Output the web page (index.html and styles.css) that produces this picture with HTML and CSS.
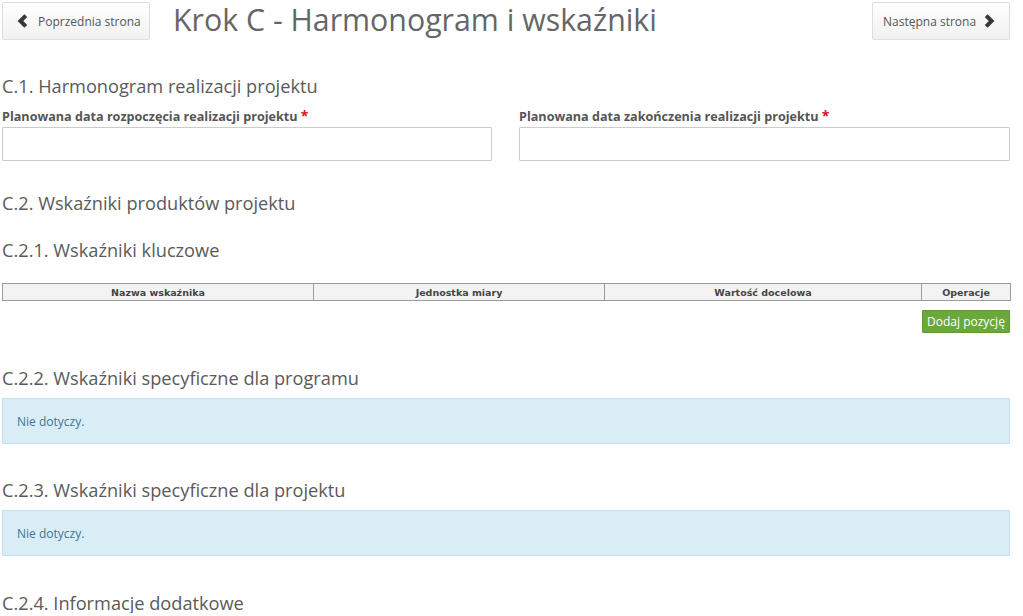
FILE: index.html
```html
<!DOCTYPE html>
<html lang="pl">
<head>
<meta charset="utf-8">
<title>Krok C - Harmonogram i wskaźniki</title>
<link rel="stylesheet" href="styles.css">
</head>
<body>
<div class="page">
  <div class="topbar">
    <a class="navbtn prev" href="#">
      <svg class="chev" width="11" height="14" viewBox="0 0 11 14"><polyline points="8.8,1.6 3.4,7 8.8,12.4" fill="none" stroke="#383838" stroke-width="4" stroke-linejoin="miter"/></svg>
      <span>Poprzednia strona</span>
    </a>
    <h1 class="title">Krok C - Harmonogram i wskaźniki</h1>
    <a class="navbtn next" href="#">
      <span>Następna strona</span>
      <svg class="chev" width="11" height="14" viewBox="0 0 11 14"><polyline points="2.2,1.6 7.6,7 2.2,12.4" fill="none" stroke="#383838" stroke-width="4" stroke-linejoin="miter"/></svg>
    </a>
  </div>

  <h3 class="sec sec-c1">C.1. Harmonogram realizacji projektu</h3>
  <div class="dates">
    <div class="field">
      <label class="lbl">Planowana data rozpoczęcia realizacji projektu <span class="req">*</span></label>
      <input class="inp" type="text">
    </div>
    <div class="field">
      <label class="lbl">Planowana data zakończenia realizacji projektu <span class="req">*</span></label>
      <input class="inp" type="text">
    </div>
  </div>

  <h3 class="sec sec-c2">C.2. Wskaźniki produktów projektu</h3>
  <h3 class="sec sec-c21">C.2.1. Wskaźniki kluczowe</h3>
  <table class="grid">
    <thead>
      <tr>
        <th class="c1">Nazwa wskaźnika</th>
        <th class="c2">Jednostka miary</th>
        <th class="c3">Wartość docelowa</th>
        <th class="c4">Operacje</th>
      </tr>
    </thead>
  </table>
  <div class="actions"><button class="addbtn" type="button">Dodaj pozycję</button></div>

  <h3 class="sec sec-c22">C.2.2. Wskaźniki specyficzne dla programu</h3>
  <div class="info">Nie dotyczy.</div>

  <h3 class="sec sec-c23">C.2.3. Wskaźniki specyficzne dla projektu</h3>
  <div class="info">Nie dotyczy.</div>

  <h3 class="sec sec-c24">C.2.4. Informacje dodatkowe</h3>
</div>
</body>
</html>
```

FILE: styles.css
```css
html, body {
  margin: 0;
  padding: 0;
  background: #ffffff;
}

body {
  font-family: "Open Sans", "Noto Sans", sans-serif;
  color: #555555;
  overflow: hidden;
}

.page {
  width: 1008px;
  margin-left: 2px;
}

.topbar {
  display: flex;
  align-items: flex-start;
  height: 40px;
}

.navbtn {
  display: flex;
  align-items: center;
  box-sizing: border-box;
  height: 38px;
  margin-top: 2px;
  border: 1px solid #dedede;
  border-radius: 2px;
  background: linear-gradient(#ffffff, #f1f1f1);
  color: #555555;
  text-decoration: none;
  font-size: 12px;
  white-space: nowrap;
}

.prev {
  width: 148px;
  padding-left: 14px;
  gap: 10px;
}

.next {
  width: 138px;
  padding-left: 10px;
  gap: 8px;
  margin-left: auto;
}

.chev {
  display: block;
  flex: none;
}

.title {
  margin: 0 0 0 23px;
  font-size: 30.3px;
  font-weight: 400;
  line-height: 40px;
  color: #666666;
  white-space: nowrap;
}

.sec {
  margin: 0;
  font-size: 18.2px;
  font-weight: 400;
  line-height: 20px;
  color: #5a5a5a;
  white-space: nowrap;
}

.sec-c1 { margin-top: 36px; }
.sec-c2 { margin-top: 32px; }
.sec-c21 { margin-top: 27px; }
.sec-c22 { margin-top: 35px; }
.sec-c23 { margin-top: 36px; }
.sec-c24 { margin-top: 37px; }

.dates {
  display: grid;
  grid-template-columns: 490px 491px;
  column-gap: 27px;
  margin-top: 11px;
}

.field {
  display: flex;
  flex-direction: column;
}

.lbl {
  font-size: 12.6px;
  font-weight: 700;
  line-height: 17px;
  color: #555555;
  height: 20px;
}

.req {
  color: #e0101a;
  font-size: 14px;
}

.inp {
  box-sizing: border-box;
  height: 34px;
  width: 100%;
  margin: 0;
  border: 1px solid #cccccc;
  border-radius: 1px;
  background: #ffffff;
}

.grid {
  width: 1008px;
  margin-top: 23px;
  border-collapse: collapse;
  table-layout: fixed;
}

.grid th {
  box-sizing: border-box;
  height: 17px;
  padding: 0;
  border: 1px solid #9a9a9a;
  background: #f3f3f3;
  font-family: "DejaVu Sans", sans-serif;
  font-size: 9.5px;
  font-weight: 700;
  color: #444444;
  text-align: center;
  line-height: 15px;
}

.grid .c1 { width: 311px; }
.grid .c2 { width: 291px; }
.grid .c3 { width: 317px; }
.grid .c4 { width: 89px; }

.actions {
  display: flex;
  justify-content: flex-end;
  margin-top: 9px;
}

.addbtn {
  box-sizing: border-box;
  width: 88px;
  height: 23px;
  padding: 0;
  border: 1px solid #5f9a32;
  border-radius: 1px;
  background: #6aa83b;
  color: #ffffff;
  font-family: "Open Sans", "Noto Sans", sans-serif;
  font-size: 12px;
  line-height: 21px;
}

.info {
  box-sizing: border-box;
  height: 46px;
  margin-top: 10px;
  padding-left: 14px;
  border: 1px solid #bfe3ef;
  background: #d9edf7;
  color: #3b7695;
  font-size: 12px;
  line-height: 45px;
}
```
